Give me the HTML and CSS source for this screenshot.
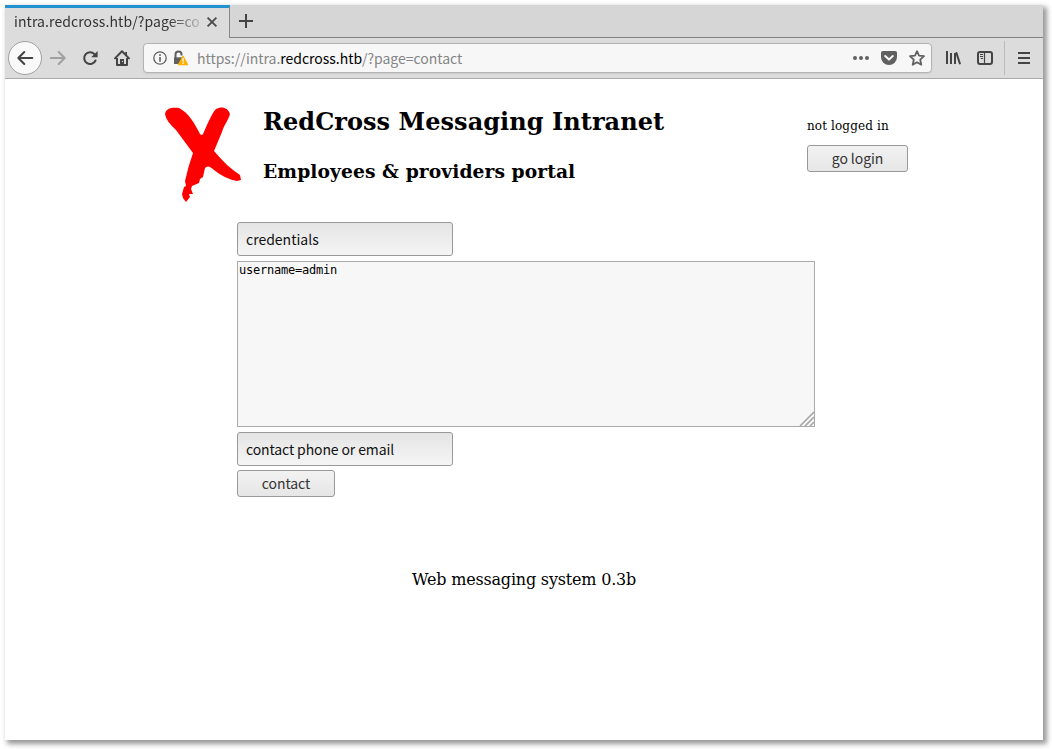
FILE: index.html
```html
<!DOCTYPE html>
<html lang="en">
<head>
<meta charset="utf-8">
<title>intra.redcross.htb/?page=contact</title>
<link rel="stylesheet" href="styles.css">
</head>
<body>
<div class="window">
  <div class="tabs">
    <div class="tab">
      <span class="tab-title">intra.redcross.htb/?page=co</span>
      <svg class="tab-close" width="10" height="10" viewBox="0 0 10 10"><path d="M.6 .6l8.800 8.800M9.400 .6l-8.800 8.800" fill="none" stroke="#4a4a4a" stroke-width="1.8"/></svg>
    </div>
    <div class="tab-rest">
      <svg width="14" height="14" viewBox="0 0 14 14"><path d="M7 0v14M0 7h14" stroke="#444" stroke-width="2"/></svg>
    </div>
  </div>
  <div class="toolbar">
    <div class="back"><svg width="16" height="16" viewBox="0 0 16 16"><path d="M15.3 8H1.5M7.3 2L1.3 8l6 6" fill="none" stroke="#444" stroke-width="2" stroke-linecap="round" stroke-linejoin="round"/></svg></div>
    <div class="nav">
      <svg width="16" height="16" viewBox="0 0 16 16"><path d="M.8 8h13.7M8.7 2l6 6-6 6" fill="none" stroke="#a0a0a0" stroke-width="2" stroke-linecap="round" stroke-linejoin="round"/></svg>
      <svg width="16" height="16" viewBox="0 0 16 16"><path d="M12.4 4.1A5.900 5.900 0 1 0 13.500 10.500" fill="none" stroke="#444" stroke-width="2.1" stroke-linecap="round"/><path d="M15.600 1v6.200H9.200z" fill="#444"/></svg>
      <svg width="16" height="16" viewBox="0 0 16 16"><path d="M1 8.4L8 1.3l7 7.1" fill="none" stroke="#444" stroke-width="2" stroke-linecap="round" stroke-linejoin="round"/><path d="M3 8v7h10V8" fill="none" stroke="#444" stroke-width="2" stroke-linejoin="round"/><path d="M6 15V9h4v6z" fill="#444"/><path d="M11.2 2h1.8v3.6h-1.8z" fill="#444"/><path d="M8 11h1v1H8z" fill="#ddd"/></svg>
    </div>
    <div class="urlbar">
      <svg class="info" width="14" height="14" viewBox="0 0 14 14"><circle cx="7" cy="7" r="6.2" fill="none" stroke="#606060" stroke-width="1.3"/><path d="M7 6v4.7M7 3.2v1.7" stroke="#606060" stroke-width="1.6"/></svg>
      <svg class="lock" width="16" height="16" viewBox="0 0 16 16"><path d="M2.500 8V4.500a3 3 0 0 1 6 0V5.500" fill="none" stroke="#606060" stroke-width="2"/><path d="M1 7.3h8V14H1z" fill="#606060"/><path d="M10 6.300L14.600 14.700H5.400z" fill="#ffb005" stroke="#ffb005" stroke-width="1.3" stroke-linejoin="round"/><path d="M10 8v3.6M10 12.5v1.6" stroke="#fff" stroke-width="1.3"/></svg>
      <span class="url">https://intra.<b>redcross.htb</b>/?page=contact</span>
      <div class="url-actions">
        <svg width="16" height="16" viewBox="0 0 16 16"><g fill="#606060"><circle cx="2" cy="8" r="2"/><circle cx="8" cy="8" r="2"/><circle cx="14" cy="8" r="2"/></g></svg>
        <svg class="pocket" width="16" height="16" viewBox="0 0 16 16"><path d="M1.8 1h12.4Q16 1 16 2.8V7a8 8 0 0 1-16 0V2.8Q0 1 1.8 1z" fill="#606060"/><path d="M4.2 6L8 9.6 11.8 6" fill="none" stroke="#f7f7f7" stroke-width="2" stroke-linecap="round" stroke-linejoin="round"/></svg>
        <svg width="16" height="16" viewBox="0 0 16 16"><path d="M8 1.2l2 4.5 5 .5-3.8 3.500 1.1 5L8 12.200l-4.3 2.500 1.1-5L1 6.2l5-.5z" fill="none" stroke="#606060" stroke-width="1.800" stroke-linejoin="round"/></svg>
      </div>
    </div>
    <div class="tools">
      <svg width="16" height="16" viewBox="0 0 16 16"><path d="M2 1v13M6 3v11M10 3v11" stroke="#444" stroke-width="2"/><path d="M11.200 2.300l3.900 12" stroke="#444" stroke-width="2"/></svg>
      <svg width="16" height="16" viewBox="0 0 16 16"><rect x="1" y="2" width="14" height="12" rx="2" fill="none" stroke="#444" stroke-width="2"/><path d="M7.5 2v12" stroke="#444" stroke-width="1.2"/><path d="M3 4.5h3M3 6.5h3M3.8 8.5H6" stroke="#444"/></svg>
    </div>
    <div class="menu"><svg width="12" height="12" viewBox="0 0 12 12"><path d="M0 1h12M0 6h12M0 11h12" stroke="#444" stroke-width="2"/></svg></div>
  </div>
  <main class="page">
    <header class="header">
      <svg class="logo" width="76" height="95" viewBox="0 0 76 95"><path d="M0 7C1 1 7 0 14 1C24 6 30 17 35 27Q37 29 38 27C43 16 47 6 51 2C56-1 63 0 65 7C63 14 59 18 57 25L49 44Q55 51 62 58Q69 64 75 68L76 73L72 74Q60 72 49 63Q43 57 40 61L38 70L35 72L34 76L27 79L26 82L28 87L24 87L25 90L21 95L18 91L17 87L19 80L21 79L20 74Q23 60 28 46L11 23Q1 14 0 7Z" fill="#f00"/></svg>
      <div class="headings">
        <h1>RedCross Messaging Intranet</h1>
        <h2>Employees &amp; providers portal</h2>
      </div>
      <div class="account">
        <span class="status">not logged in</span>
        <button class="button login">go login</button>
      </div>
    </header>
    <form class="form">
      <div class="field"><span class="subject">credentials</span></div>
      <div class="message"><span class="msg-text">username=admin</span>
        <svg class="grip" width="15" height="15" viewBox="0 0 15 15"><path d="M1 15L15 1M6 15l9-9M11 15l4-4" stroke="#a8a8a8" stroke-width="1.6"/></svg>
      </div>
      <div class="field second"><span class="phone">contact phone or email</span></div>
      <button class="button contact" type="button">contact</button>
    </form>
    <footer class="footer"><span>Web messaging system 0.3b</span></footer>
  </main>
</div>
</body>
</html>
```
FILE: styles.css
```css
* { box-sizing: border-box; }
body { margin: 0; padding: 5px; height: 749px; background: #fff; overflow: hidden; font-family: "Noto Sans CJK SC", "Noto Sans", sans-serif; }
svg { display: block; flex: none; overflow: visible; }
.window { width: 1038px; height: 735px; background: #fff; box-shadow: 3px 3px 5px 1px #999; }
.tabs { display: flex; height: 33px; background: #d6d6d6; }
.tab { width: 225px; display: flex; align-items: center; padding: 0 12px 3px 9px; background: #dcdcdc; border-top: 3px solid #2292d0; border-right: 1px solid #888; }
.tab-title { width: 188px; padding-bottom: 1px; white-space: nowrap; font-size: 14px; line-height: 22px; letter-spacing: .09px; color: #333; -webkit-mask-image: linear-gradient(90deg, #000 154px, transparent 194px); mask-image: linear-gradient(90deg, #000 154px, transparent 194px); }
.tab-close { margin: 1px 0 0 5px; }
.tab-rest { flex: 1; padding: 9px; border-bottom: 1px solid #808080; }
.toolbar { display: flex; align-items: center; height: 41px; background: #dcdcdc; border-bottom: 1px solid #aaa; padding-left: 3px; }
.back { width: 34px; height: 34px; border: 1px solid #a0a0a0; border-radius: 50%; background: #f9f9f9; display: grid; place-items: center; }
.nav { display: flex; gap: 16px; margin-left: 8px; }
.urlbar { width: 789px; height: 30px; margin-left: 13px; display: flex; align-items: center; border: 1px solid #b3b3b3; border-radius: 4px; background: #f7f7f7; padding: 0 6px 0 9px; box-shadow: 0 1px 2px #ccc; }
.lock { margin-left: 6px; }
.url { margin-left: 8px; white-space: nowrap; font-size: 14px; line-height: 22px; letter-spacing: -.03px; color: #858585; }
.url b { font-weight: 400; color: #000; }
.url-actions { display: flex; gap: 12px; margin-left: auto; }
.tools { display: flex; gap: 16px; margin-left: 13px; }
.menu { margin-left: 11px; height: 34px; padding-left: 13px; border-left: 1px solid #bbb; display: flex; align-items: center; }
.page { padding: 28px 135px 0 160px; }
.header { display: flex; height: 115px; }
.headings { margin-left: 22px; padding-top: 1px; width: 544px; font-family: "DejaVu Serif", serif; }
h1 { margin: 0; font-size: 24px; line-height: 28px; letter-spacing: .05px; white-space: nowrap; }
h2 { margin: 24px 0 0; font-size: 18.72px; line-height: 22px; letter-spacing: .07px; white-space: nowrap; }
.account { display: flex; flex-direction: column; align-items: flex-start; padding-top: 11px; }
.status { font: 12px/16px "DejaVu Serif", serif; letter-spacing: .12px; white-space: nowrap; }
.button { display: flex; align-items: center; justify-content: center; height: 27px; padding: 0 0 2px; border: 1px solid #999; border-radius: 3px; background: linear-gradient(#f2f2f2, #e6e6e6); color: #333; font: 14px/20px "Noto Sans CJK SC", sans-serif; white-space: nowrap; }
.login { width: 101px; margin-top: 11px; letter-spacing: -.1px; }
.form { margin-left: 72px; }
.field { width: 216px; height: 34px; padding: 1px 8px 0; border: 1px solid #999; border-radius: 3px; background: linear-gradient(#e5e5e5, #f5f5f5); font-size: 14px; line-height: 30px; color: #111; white-space: nowrap; }
.message { position: relative; width: 578px; height: 166px; margin-top: 5px; padding: 1px; border: 1px solid #aaa; background: #f7f7f7; font: 12px/15px "DejaVu Sans Mono", monospace; letter-spacing: -.22px; }
.grip { position: absolute; right: 0; bottom: 0; overflow: hidden; }
.second { margin-top: 5px; letter-spacing: -.12px; }
.contact { width: 98px; margin-top: 4px; letter-spacing: -.05px; }
.footer { margin: 73px 0 0 247px; font: 16px/20px "DejaVu Serif", serif; letter-spacing: -.19px; white-space: nowrap; }
```
